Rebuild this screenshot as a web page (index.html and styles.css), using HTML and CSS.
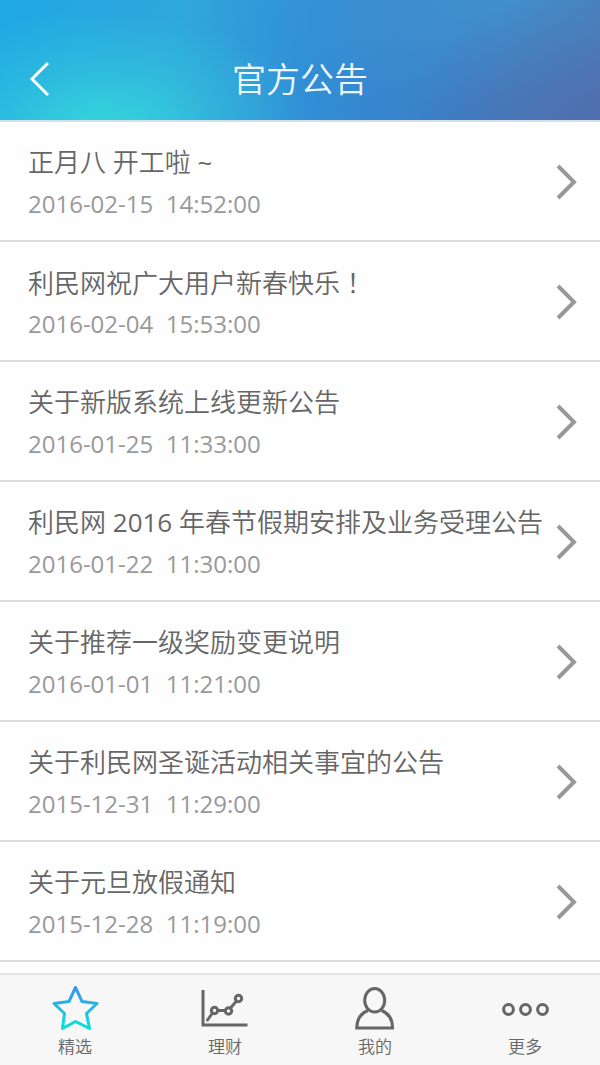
FILE: index.html
```html
<!DOCTYPE html>
<html lang="zh-CN">
<head>
    <meta charset="UTF-8">
    <meta name="viewport" content="width=device-width, initial-scale=1.0">
    <title>官方公告</title>
    <link rel="stylesheet" href="styles.css">
</head>
<body>
    <header class="header">
        <button class="back" type="button" aria-label="返回">
            <svg width="24" height="36" viewBox="0 0 24 36"><path d="M20 2 4 18 20 34"/></svg>
        </button>
        <h1>官方公告</h1>
    </header>

    <main>
        <ul class="notice-list">
            <li><a class="notice" href="#">
                <span class="notice-text"><span class="notice-title">正月八 开工啦 <span class="latin">~</span></span><time class="notice-time">2016-02-15  14:52:00</time></span>
                <svg class="arrow" width="22" height="36" viewBox="0 0 22 36"><path d="M2 2 18 18 2 34"/></svg>
            </a></li>
            <li><a class="notice" href="#">
                <span class="notice-text"><span class="notice-title">利民网祝广大用户新春快乐<span class="mark" lang="zh-TW">！</span></span><time class="notice-time">2016-02-04  15:53:00</time></span>
                <svg class="arrow" width="22" height="36" viewBox="0 0 22 36"><path d="M2 2 18 18 2 34"/></svg>
            </a></li>
            <li><a class="notice" href="#">
                <span class="notice-text"><span class="notice-title">关于新版系统上线更新公告</span><time class="notice-time">2016-01-25  11:33:00</time></span>
                <svg class="arrow" width="22" height="36" viewBox="0 0 22 36"><path d="M2 2 18 18 2 34"/></svg>
            </a></li>
            <li><a class="notice" href="#">
                <span class="notice-text"><span class="notice-title">利民网 <span class="latin">2016</span> 年春节假期安排及业务受理公告</span><time class="notice-time">2016-01-22  11:30:00</time></span>
                <svg class="arrow" width="22" height="36" viewBox="0 0 22 36"><path d="M2 2 18 18 2 34"/></svg>
            </a></li>
            <li><a class="notice" href="#">
                <span class="notice-text"><span class="notice-title">关于推荐一级奖励变更说明</span><time class="notice-time">2016-01-01  11:21:00</time></span>
                <svg class="arrow" width="22" height="36" viewBox="0 0 22 36"><path d="M2 2 18 18 2 34"/></svg>
            </a></li>
            <li><a class="notice" href="#">
                <span class="notice-text"><span class="notice-title">关于利民网圣诞活动相关事宜的公告</span><time class="notice-time">2015-12-31  11:29:00</time></span>
                <svg class="arrow" width="22" height="36" viewBox="0 0 22 36"><path d="M2 2 18 18 2 34"/></svg>
            </a></li>
            <li><a class="notice" href="#">
                <span class="notice-text"><span class="notice-title">关于元旦放假通知</span><time class="notice-time">2015-12-28  11:19:00</time></span>
                <svg class="arrow" width="22" height="36" viewBox="0 0 22 36"><path d="M2 2 18 18 2 34"/></svg>
            </a></li>
        </ul>
    </main>

    <nav class="tabbar">
        <a href="#">
            <svg width="50" height="48" viewBox="0 0 50 48">
                <defs>
                    <linearGradient id="star" x1="0" y1="0" x2="0" y2="1">
                        <stop offset="0" stop-color="#3c94ee"/>
                        <stop offset="1" stop-color="#08e2d8"/>
                    </linearGradient>
                </defs>
                <path class="star" d="M25.500 4.500 32 18.500 47 20.500 36.500 30.500 39.500 45.500 25.500 38.500 12.500 45.500 14.500 30.500 4 20.500 19 18.500Z"/>
            </svg>
            <span>精选</span>
        </a>
        <a href="#">
            <svg width="50" height="48" viewBox="0 0 50 48">
                <path d="M3 7V42H47.500"/>
                <path d="M7.500 37 12.500 30M17.500 27.500H25M30.500 25 36.500 18" stroke-linecap="round"/>
                <circle cx="14.500" cy="27.500" r="3.200"/>
                <circle cx="28.500" cy="28" r="3.200"/>
                <circle cx="38.500" cy="15.500" r="3.200"/>
            </svg>
            <span>理财</span>
        </a>
        <a href="#">
            <svg width="50" height="48" viewBox="0 0 50 48">
                <ellipse cx="24.700" cy="17.300" rx="10" ry="11.800"/>
                <path d="M18 27.500C11 30 7 36 6.700 45H42.500C42.500 36 38 30 31.500 27.500"/>
            </svg>
            <span>我的</span>
        </a>
        <a href="#">
            <svg width="50" height="48" viewBox="0 0 50 48">
                <circle cx="8.500" cy="26.500" r="4.900"/>
                <circle cx="25.500" cy="26.500" r="4.900"/>
                <circle cx="42.500" cy="26.500" r="4.900"/>
            </svg>
            <span>更多</span>
        </a>
    </nav>
</body>
</html>
```
FILE: styles.css
```css
* {
    box-sizing: border-box;
}

body {
    margin: 0;
    padding-bottom: 92px; /* room for the tab bar */
    background: #fefefe;
    color: #666;
    font-family: "Open Sans", "Noto Sans CJK SC", sans-serif;
    font-weight: 350;
}

a {
    color: inherit;
    text-decoration: none;
}

svg {
    display: block;
    flex: none;
    fill: none;
    stroke: #666;
    stroke-width: 3;
}

.header {
    display: grid;
    grid-template-columns: 80px 1fr 80px;
    height: 122px;
    padding-top: 36px;
    border-bottom: 2px solid #d0dfea;
    background:
        radial-gradient(ellipse 210px 120px at 17% 108%, #36d6dc, rgba(54, 214, 220, 0.35) 55%, rgba(54, 214, 220, 0)),
        radial-gradient(ellipse 240px 160px at 108% 105%, rgba(86, 103, 168, 0.8), rgba(86, 103, 168, 0)),
        radial-gradient(ellipse 240px 110px at 82% 0%, rgba(66, 149, 207, 0.8), rgba(66, 149, 207, 0)),
        linear-gradient(100deg, #1fa8e4 0%, #2fa7dc 30%, #318ed6 52%, #3b80c7 75%, #497bb6 100%);
    background-clip: padding-box;
}

.header h1 {
    margin: 0;
    color: #eef5fb;
    font-size: 34px;
    font-weight: 350;
    line-height: 86px;
    text-align: center;
}

.back {
    display: flex;
    align-items: center;
    padding: 0 0 0 28px;
    border: none;
    background: none;
    cursor: pointer;
}

.back svg {
    stroke: #fff;
}

.notice-list {
    margin: 0;
    padding: 0;
    list-style: none;
}

.notice {
    display: flex;
    align-items: center;
    justify-content: space-between;
    height: 120px;
    padding: 2px 22px 0 28px;
    border-bottom: 2px solid #dcdcdc;
}

.notice-text {
    min-width: 0;
}

.notice-title,
.notice-time {
    display: block;
    white-space: pre;
}

.notice-title {
    height: 44px;
    font-size: 26px;
    line-height: 44px;
}

.latin {
    font-weight: 400;
}

/* full-width mark, centred in its cell */
.mark {
    font-family: "Noto Sans CJK TC", sans-serif;
}

.notice-time {
    color: #999;
    font-size: 24px;
    font-weight: 400;
    line-height: 40px;
}

.arrow {
    stroke: #999;
    stroke-width: 4;
}

.tabbar {
    position: fixed;
    right: 0;
    bottom: 0;
    left: 0;
    display: flex;
    height: 92px;
    border-top: 2px solid #e4e4e4;
    background: #f7f7f7;
}

.tabbar a {
    display: flex;
    flex: 1;
    flex-direction: column;
    align-items: center;
    padding-top: 8px;
    font-size: 17px;
    line-height: 32px;
}

.tabbar .star {
    stroke: url(#star);
    stroke-linejoin: round;
}
```
